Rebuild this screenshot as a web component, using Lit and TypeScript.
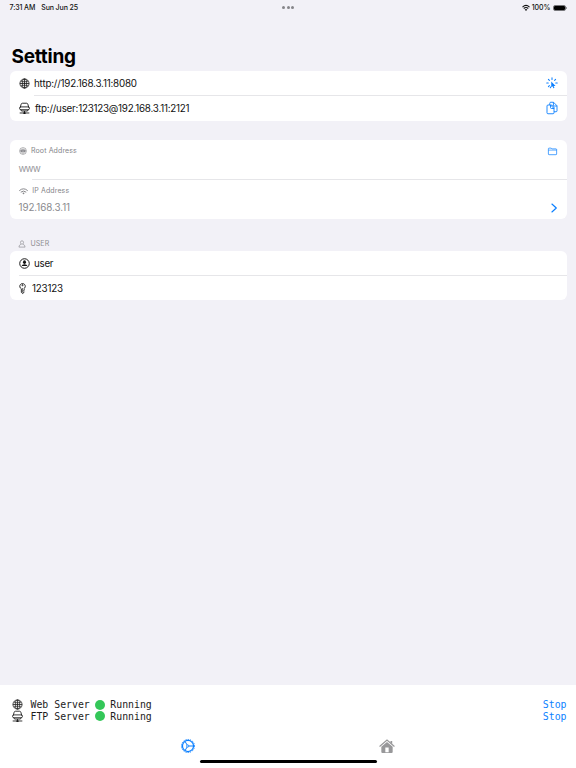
import { LitElement, html, svg, css } from "lit";
import { customElement, property } from "lit/decorators.js";

const glyphs: Record<string, unknown> = {
  globe: svg`<g fill="none" stroke="currentColor" stroke-width="1.7"><circle cx="12" cy="12" r="10"/><ellipse cx="12" cy="12" rx="4.9" ry="10"/><path d="M12 2v20M2 12h20M4 6.5c4 2.5 12 2.5 16 0M4 17.5c4-2.5 12-2.5 16 0"/></g>`,
  drive: svg`<g fill="none" stroke="currentColor" stroke-width="1.9" stroke-linejoin="round"><path d="M2.500 10 4.800 2.500Q5.500 .5 7.500 .5h9q2 0 2.700 2L21.500 10"/><rect x="1.200" y="8.500" width="21.600" height="6.200" rx="3"/><path d="M4 14.700 5.500 17.500h13L20 14.700M12 17.500v5M1.500 21.800h21"/></g><rect x="9.500" y="20" width="5" height="4" rx="1" fill="currentColor"/>`,
  rays: svg`<g fill="none" stroke="currentColor" stroke-width="2.100" stroke-linecap="round"><path d="M12 1.500V5M4.800 4.800l2 2M19.200 4.800l-2 2M1.500 12H4.500M19.500 12h3M4.800 19.200l2-2M9 20l-.4 1.500"/></g><path d="M10.500 9v12l2.600-2.300 1.700 4 2.200-.9-1.900-3.900h4z" fill="currentColor"/>`,
  docs: svg`<g fill="none" stroke="currentColor" stroke-width="1.800" stroke-linejoin="round"><path d="M7.500 6V2.500Q7.500 .5 9.500 .5H15L22 7.500v10q0 2-2 2H16"/><path d="M14.800 .5V6q0 2 2 2H22"/><path d="M4 6H9l7 7v8.500q0 2-2 2H4q-2 0-2-2V8q0-2 2-2z"/><path d="M9 6v5q0 2 2 2h5M9 6h2.500L16 10.500V13"/></g>`,
  disc: svg`<circle cx="12" cy="12" r="10.200" fill="none" stroke="currentColor" stroke-width="1.900"/><path d="M5.700 7.500Q12 3 18.300 7.500z" fill="currentColor"/><rect x="4.500" y="8.500" width="15" height="7" rx="1" fill="currentColor"/><path d="M7 11l2 2 3-2 3 2 2-2" fill="none" stroke="#fff" stroke-width="1"/><path d="M6.500 17.200h11Q12 21.500 6.500 17.200z" fill="currentColor"/>`,
  wifi: svg`<g fill="none" stroke="currentColor" stroke-width="2.600" stroke-linecap="round"><path d="M1.500 9.200Q12-.2 22.500 9.200M5.500 13.200Q12 7.800 18.500 13.200"/></g><path d="M8.800 16.300Q12 13.600 15.200 16.300L12 19.700z" fill="currentColor"/>`,
  wifiBold: svg`<g fill="none" stroke="currentColor" stroke-width="3.200"><path d="M1.500 9.200Q12-.6 22.500 9.200M5.200 13.500Q12 7.200 18.800 13.500"/></g><path d="M8.100 16.600Q12 13 15.900 16.600L12 20.800z" fill="currentColor"/>`,
  folder: svg`<path d="M1 7V4.700Q1 3 2.700 3h5.600L10.600 5h10.700Q23 5 23 6.700v12.100q0 1.700-1.700 1.700H2.700Q1 20.500 1 18.800z" fill="none" stroke="currentColor" stroke-width="1.900"/><path d="M1 6.500h22v3.300H1z" fill="currentColor" opacity=".5"/>`,
  chevron: svg`<path d="M7 2.500 17.500 12 7 21.500" fill="none" stroke="currentColor" stroke-width="2.800" stroke-linecap="round" stroke-linejoin="round"/>`,
  person: svg`<g fill="none" stroke="currentColor" stroke-width="2"><ellipse cx="12" cy="7.500" rx="4.600" ry="5.200"/><path d="M8.800 12.800Q3 15 2.800 21.300h18.400Q21 15 15.200 12.800"/></g>`,
  account: svg`<circle cx="12" cy="12" r="10.400" fill="none" stroke="currentColor" stroke-width="2.100"/><ellipse cx="12" cy="9" rx="3.300" ry="4" fill="currentColor"/><path d="M5.600 17.500q.5-4 6.400-4t6.400 4z" fill="currentColor"/>`,
  key: svg`<g fill="none" stroke="currentColor" stroke-width="1.900" stroke-linejoin="round"><path d="M9.500 12.600A6 6 0 1 1 15 12.400L15.800 14.500 14.500 16l1.600 1.700-1.800 1.500.9 1.500L12 23l-2.500-2.500z"/><circle cx="12" cy="4.800" r="1.300"/><path d="M12 11v10" stroke-width="1.300"/></g>`,
  gear: svg`<g fill="none" stroke="currentColor"><circle cx="12" cy="12" r="11.200" stroke-width="1.600" stroke-dasharray="2.200 1.710"/><circle cx="12" cy="12" r="9.500" stroke-width="2.100"/><circle cx="11.500" cy="12" r="1.900" stroke-width="1.500"/><path d="M13.500 12H21M10.500 10.300 7 4.300M10.500 13.700 7 19.700" stroke-width="1.700"/></g>`,
  house: svg`<path d="M1.300 12.300 12 3.200l10.700 9.100" fill="none" stroke="currentColor" stroke-width="1.800" stroke-linecap="round"/><path d="M17.200 4.400h2.600v5l-2.600-2.200z" fill="currentColor"/><path fill-rule="evenodd" d="M12 5.900 20.500 13v8q0 1.600-1.600 1.600H5.100Q3.500 22.600 3.500 21v-8zM9.500 14.300v7h5v-7z" fill="currentColor"/>`,
};

@customElement("ui-glyph")
class UiGlyph extends LitElement {
  @property() name = "";
  static styles = css`
    :host { display: block; flex: none; }
    svg { display: block; width: 100%; height: 100%; overflow: visible; }
  `;
  render() {
    return html`<svg viewBox="0 0 24 24">${glyphs[this.name]}</svg>`;
  }
}

@customElement("app-root")
class AppRoot extends LitElement {
  static styles = css`
    :host { display: flex; flex-direction: column; height: 768px; width: 576px; overflow: hidden;
      background: #f2f1f7; color: #111; font: 9.8px/12px Inter, "Liberation Sans", sans-serif; white-space: nowrap; }
    * { box-sizing: border-box; }
    .status { display: grid; grid-template-columns: 1fr auto 1fr; align-items: center; height: 14px; padding: 0 9px 0 9.500px; font-size: 7px; font-weight: 500; line-height: 14px; }
    .clock { display: flex; gap: 6px; padding-top: 1px; letter-spacing: -.1px; }
    .dots { display: flex; gap: 1.500px; }
    .dot { width: 3px; height: 3px; border-radius: 50%; background: #858589; }
    .power { display: flex; justify-content: flex-end; align-items: center; }
    .percent { padding-top: 1px; letter-spacing: -.02px; }
    .signal { width: 8px; height: 8px; margin-right: 2px; }
    .battery { width: 13px; height: 6px; margin-left: 2px; border: .5px solid #77777b; border-radius: 2px; }
    .charge { height: 100%; border-radius: 1px; background: #000; }
    .cap { width: 1px; height: 2px; margin-left: .5px; background: #99999d; }
    h1 { margin: 29px 0 0 11.500px; height: 28px; font-size: 19px; line-height: 27px; font-weight: 700; letter-spacing: -.25px; color: #000; }
    .card { margin: 0 9.500px; background: #fff; border-radius: 6px; overflow: hidden; flex: none; }
    .row { display: flex; align-items: center; height: 24.500px; padding: 0 9px; }
    .links { height: 49.500px; }
    .links .row { height: 24.250px; }
    .line { height: 1px; background: #e6e6e9; }
    .from-text { margin-left: 24.500px; }
    .from-caption { margin-left: 22px; }
    .from-icon { margin-left: 9px; }
    .blue { color: #0a7fff; }
    .i10 { width: 10px; height: 10px; margin-right: -1.200px; }
    .i11 { width: 11px; height: 11px; }
    .i12 { width: 12px; height: 12px; }
    .web, .ftp { padding-top: 1px; }
    .web { margin-left: 4.500px; letter-spacing: -.19px; }
    .ftp { margin-left: 5.500px; letter-spacing: -.22px; }
    .user { letter-spacing: -.28px; }
    .pass { letter-spacing: -.2px; margin-left: 4px; }
    .end { margin-left: auto; }
    .address { margin-top: 19.500px; height: 79px; }
    .field { height: 39px; padding: 5px 9px 0; color: #8a8a8e; }
    .caption { display: flex; align-items: center; height: 12px; font-size: 7px; letter-spacing: .12px; color: #858589; }
    .caption .root { padding-top: .5px; }
    .i8 { width: 8px; height: 8px; }
    .i9 { width: 9px; height: 9px; margin-right: .3px; }
    .root { margin-left: 4.500px; }
    .value { display: flex; align-items: center; height: 12px; margin-top: 5px; letter-spacing: -.06px; }
    .dim { color: #98989c; letter-spacing: -.9px; padding-top: 1px; }
    .section { display: flex; align-items: center; height: 12px; margin: 18.500px 0 1.500px 18px; font-size: 7px; letter-spacing: .08px; color: #8d8d91; }
    .users { height: 49px; }
    .users .row { height: 24px; }
    .key { width: 11px; height: 13px; margin-left: -1.500px; }
    .dock { margin-top: auto; height: 83px; background: #fff; padding: 14px 9.500px 0 12px; display: flex; flex-direction: column; }
    .server { display: flex; align-items: center; height: 11.500px; font: 9.850px/11.500px "DejaVu Sans Mono", "Liberation Mono", monospace; color: #1c1c1c; }
    .name { width: 59.300px; margin-left: 7.500px; }
    .lamp { width: 10px; height: 10px; border-radius: 50%; background: #34c759; margin: 0 5px 0 5.500px; }
    .tabs { display: flex; margin-top: 15.500px; height: 16px; }
    .gear { width: 14px; height: 14px; margin: 1.200px 0 0 169px; }
    .house { width: 16px; height: 16px; margin-left: 183.500px; color: #98989a; }
    .home { width: 177px; height: 3px; border-radius: 2px; background: #000; margin: 6.500px 0 0 187.500px; flex: none; }
  `;

  private server(icon: string, name: string) {
    return html`<div class="server"><ui-glyph class="i11" name=${icon}></ui-glyph><span class="name">${name}</span><i class="lamp"></i><span>Running</span><span class="end blue">Stop</span></div>`;
  }

  render() {
    return html`
      <header class="status">
        <div class="clock"><span>7:31 AM</span><span>Sun Jun 25</span></div>
        <div class="dots"><i class="dot"></i><i class="dot"></i><i class="dot"></i></div>
        <div class="power"><ui-glyph class="signal" name="wifiBold"></ui-glyph><span class="percent">100%</span><div class="battery"><div class="charge"></div></div><i class="cap"></i></div>
      </header>
      <h1>Setting</h1>
      <section class="card links">
        <div class="row"><ui-glyph class="i11" name="globe"></ui-glyph><span class="web">http://192.168.3.11:8080</span><ui-glyph class="i12 end blue" name="rays"></ui-glyph></div>
        <div class="line from-text"></div>
        <div class="row"><ui-glyph class="i11" name="drive"></ui-glyph><span class="ftp">ftp://user:123123@192.168.3.11:2121</span><ui-glyph class="i12 end blue" name="docs"></ui-glyph></div>
      </section>
      <section class="card address">
        <div class="field">
          <div class="caption"><ui-glyph class="i8" name="disc"></ui-glyph><span class="root">Root Address</span><ui-glyph class="i9 end blue" name="folder"></ui-glyph></div>
          <div class="value dim">www</div>
        </div>
        <div class="line from-caption"></div>
        <div class="field">
          <div class="caption"><ui-glyph class="i9" name="wifi"></ui-glyph><span class="root">IP Address</span></div>
          <div class="value">192.168.3.11<ui-glyph class="i10 end blue" name="chevron"></ui-glyph></div>
        </div>
      </section>
      <div class="section"><ui-glyph class="i8" name="person"></ui-glyph><span class="root">USER</span></div>
      <section class="card users">
        <div class="row"><ui-glyph class="i11" name="account"></ui-glyph><span class="web user">user</span></div>
        <div class="line from-icon"></div>
        <div class="row"><ui-glyph class="key" name="key"></ui-glyph><span class="web pass">123123</span></div>
      </section>
      <footer class="dock">
        ${this.server("globe", "Web Server")}
        ${this.server("drive", "FTP Server")}
        <nav class="tabs"><ui-glyph class="gear blue" name="gear"></ui-glyph><ui-glyph class="house" name="house"></ui-glyph></nav>
        <div class="home"></div>
      </footer>
    `;
  }
}
